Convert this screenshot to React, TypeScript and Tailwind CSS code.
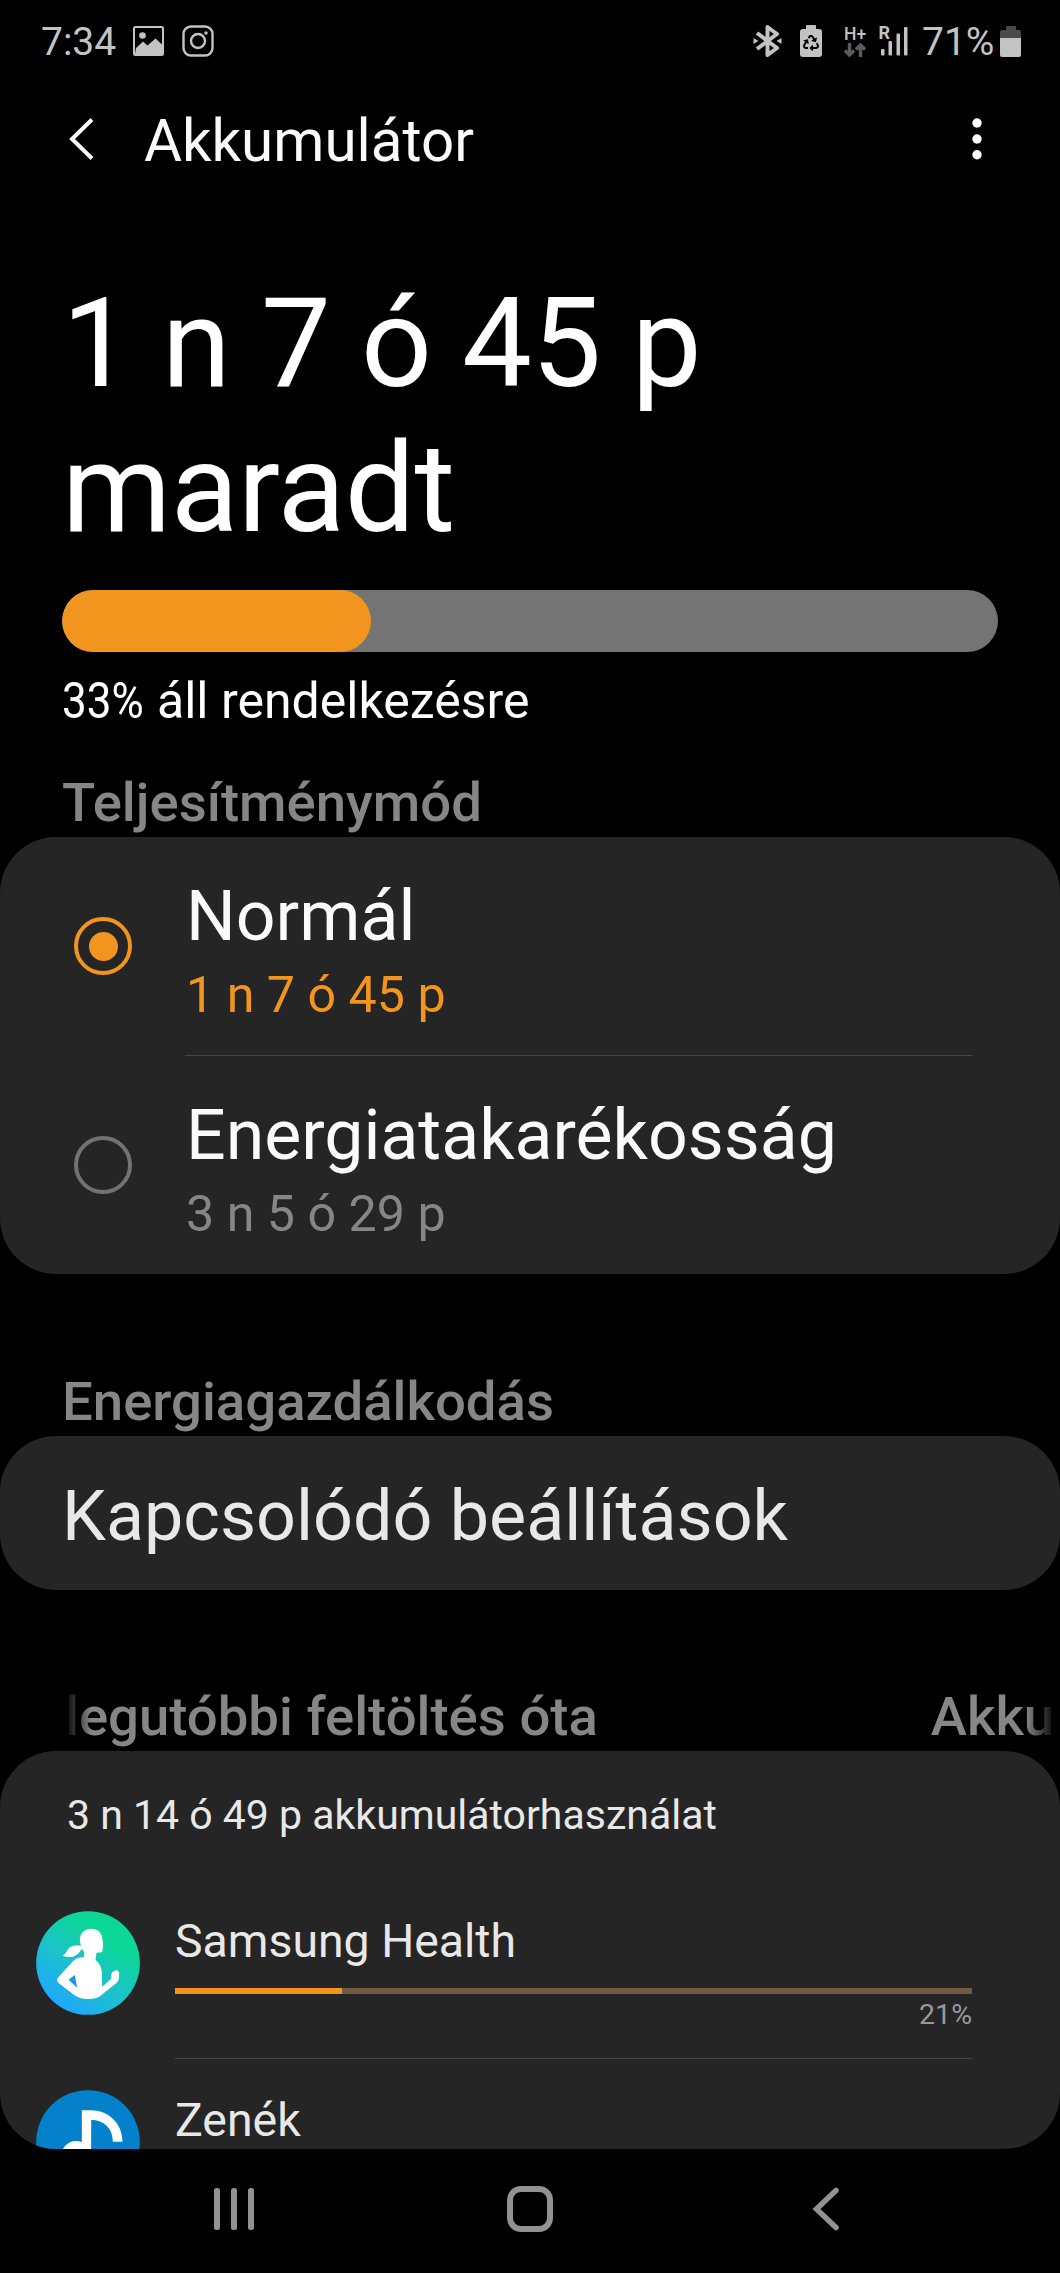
import type { ReactNode } from "react"
import { FaRecycle } from "react-icons/fa"
import clsx from "clsx"

type PowerMode = {
  name: string
  remaining: string
  selected: boolean
}

type AppUsage = {
  name: string
  percent: number
  icon: ReactNode
}

const BATTERY_LEVEL = 33

const POWER_MODES: PowerMode[] = [
  { name: "Normál", remaining: "1 n 7 ó 45 p", selected: true },
  { name: "Energiatakarékosság", remaining: "3 n 5 ó 29 p", selected: false },
]

const APP_USAGE: AppUsage[] = [
  { name: "Samsung Health", percent: 21, icon: <HealthIcon /> },
  { name: "Zenék", percent: 9, icon: <MusicIcon /> },
]

function HealthIcon() {
  return (
    <svg viewBox="48 63 311 312" className="h-[104px] w-[104px]">
      <defs>
        <linearGradient id="health" x1="0.3" y1="0.95" x2="0.75" y2="0.3">
          <stop offset="0" stopColor="#1fa9fb" />
          <stop offset="0.5" stopColor="#1bc2cb" />
          <stop offset="1" stopColor="#0bd896" />
        </linearGradient>
      </defs>
      <circle cx="203.500" cy="219" r="155.500" fill="url(#health)" />
      <path
        fill="#fff"
        d="M179 150C179 128 195 116 213 116C232 116 246 128 247 148L249 166L246 187L229 188L226 210C236 218 245 230 245 250L246 290L273 266C271 252 276 242 290 241C298 243 298 252 296 266C295 273 290 278 284 283L240 318C230 326 215 327 200 327C185 327 173 323 163 316L118 281C109 274 109 268 115 261L160 212C168 204 180 201 192 200L192 186L184 176C176 194 158 208 127 197C140 190 140 176 152 170C162 165 172 166 182 167Z"
      />
      <path fill="#1d96ea" d="M145 269L164 255L171 293Z" />
    </svg>
  )
}

function MusicIcon() {
  return (
    <svg viewBox="48 600 311 312" className="h-[104px] w-[104px]">
      <circle cx="203.500" cy="756" r="155.500" fill="#0382cb" />
      <path fill="#fff" d="M185 661H212C264 661 307 700 307 755H278C278 714 250 690 213 690V800H185Z" />
      <circle cx="168" cy="797" r="44" fill="#fff" />
    </svg>
  )
}

function StatusBar() {
  return (
    <div className="flex h-[82px] items-center pr-[39px] pl-[41px] text-[39px] leading-none text-[#c3c3c3]">
      <span className="w-[92px] pt-[3px]">7:34</span>
      <svg viewBox="0 0 31 30" className="h-[30px] w-[31px]">
        <rect x="1" y="1" width="29" height="28" rx="1.500" fill="none" stroke="currentColor" strokeWidth="2" />
        <circle cx="9.500" cy="9.500" r="3.300" fill="currentColor" />
        <path d="M3 22L10 15.500L14.500 19.500L22.500 12.500L29 18.500V28H2Z" fill="currentColor" />
      </svg>
      <svg viewBox="0 0 32 32" className="ml-[18px] h-[32px] w-[32px]" fill="none" stroke="currentColor">
        <rect x="1.500" y="1.500" width="29" height="29" rx="7.500" strokeWidth="2.400" />
        <circle cx="16" cy="16" r="7" strokeWidth="2.400" />
        <circle cx="24" cy="8" r="1.700" fill="currentColor" stroke="none" />
      </svg>

      <svg viewBox="0 0 29 34" className="ml-auto h-[34px] w-[29px]">
        <path
          d="M4 9L24 24L14.500 31V3L24 10L4 25"
          fill="none"
          stroke="currentColor"
          strokeWidth="4"
          strokeLinejoin="round"
        />
        <path d="M0.500 14L5.500 17L0.500 20ZM28.500 14L23.500 17L28.500 20Z" fill="currentColor" />
      </svg>
      <div className="ml-[18px] flex h-[32px] w-[22px] flex-col items-center">
        <div className="h-[4px] w-[10px] rounded-t-[1px] bg-[#c3c3c3]" />
        <div className="flex h-[28px] w-[22px] items-center justify-center rounded-[3px] bg-[#c3c3c3]">
          <FaRecycle className="h-[16px] w-[16px] text-black" />
        </div>
      </div>
      <div className="ml-[22px] flex h-[32px] w-[22px] flex-col justify-between">
        <span className="text-[17.500px] leading-[18px] font-medium">H+</span>
        <svg viewBox="0 0 22 14" className="h-[14px] w-[22px]" fill="none" stroke="#5c5c5c" strokeWidth="3.400">
          <path d="M5.500 0V12M1 7.500L5.500 12L10 7.500M16.500 14V2M12 6.500L16.500 2L21 6.500" />
        </svg>
      </div>
      <svg viewBox="0 0 29 32" className="ml-[13px] h-[32px] w-[29px] overflow-visible" fill="currentColor">
        <text x="-0.500" y="13.500" fontSize="18" fontWeight="700">
          R
        </text>
        <rect x="2" y="24" width="3.500" height="6.500" rx="1" />
        <rect x="9.500" y="16" width="3.500" height="14.500" rx="1" />
        <rect x="17.500" y="8.500" width="3.500" height="22" rx="1" />
        <rect x="25" y="2" width="3.500" height="28.500" rx="1" />
      </svg>
      <span className="ml-[14px] w-[78px] pt-[3px]">71%</span>
      <div className="flex h-[31px] w-[21px] flex-col items-center">
        <div className="h-[4px] w-[10px] rounded-t-[1px] bg-[#4a4a4a]" />
        <div className="h-[8px] w-full rounded-t-[2px] bg-[#4a4a4a]" />
        <div className="h-[19px] w-full rounded-b-[2px] bg-[#c3c3c3]" />
      </div>
    </div>
  )
}

function Header() {
  return (
    <header className="flex h-[113px] items-center pr-[78px] pl-[69px]">
      <svg viewBox="0 0 25 42" className="h-[42px] w-[25px]" fill="none" stroke="#fff" strokeWidth="4">
        <path d="M23 1.500L3 21L23 40.500" />
      </svg>
      <h1 className="ml-[50px] pt-[6px] text-[58.300px] leading-none text-[#fafafa]">Akkumulátor</h1>
      <svg viewBox="0 0 10 42" className="ml-auto h-[42px] w-[10px]" fill="#fff">
        <circle cx="5" cy="5" r="4.700" />
        <circle cx="5" cy="21" r="4.700" />
        <circle cx="5" cy="36.700" r="4.700" />
      </svg>
    </header>
  )
}

function SectionTitle({ children }: { children: ReactNode }) {
  return <h2 className="h-[66px] px-[62px] text-[54.500px] leading-[62px] font-medium text-[#868686]">{children}</h2>
}

function Radio({ checked }: { checked: boolean }) {
  return (
    <span
      className={clsx(
        "flex h-[58px] w-[58px] items-center justify-center rounded-full border-[4px]",
        checked ? "border-[#f1951e]" : "border-[#727272]"
      )}
    >
      {checked ? <span className="h-[29px] w-[29px] rounded-full bg-[#f1951e]" /> : null}
    </span>
  )
}

function PowerModeRow({ mode }: { mode: PowerMode }) {
  return (
    <div className="flex h-[218px] items-center pl-[74px]">
      <Radio checked={mode.selected} />
      <div className="ml-[54px] pt-[8px]">
        <p className="text-[69.800px] leading-[82px] text-[#fafafa]">{mode.name}</p>
        <p className={clsx("mt-2 text-[50.200px] leading-[60px]", mode.selected ? "text-[#f1951e]" : "text-[#868686]")}>
          {mode.remaining}
        </p>
      </div>
    </div>
  )
}

function AppUsageRow({ app }: { app: AppUsage }) {
  return (
    <div className="flex h-[179px] shrink-0 pr-[88px] pl-[36px]">
      <div className="w-[139px] pt-[31px]">{app.icon}</div>
      <div className="flex flex-1 flex-col border-b border-[#454545] pt-[34px]">
        <p className="text-[46.400px] leading-[54px] text-[#e8e8e8]">{app.name}</p>
        <div className="mt-5 h-[6px] bg-[#725b43]">
          <div className="h-full bg-[#f1951e]" style={{ width: `${app.percent}%` }} />
        </div>
        <p className="mt-1 text-right text-[28.500px] leading-[34px] text-[#999999]">{app.percent}%</p>
      </div>
    </div>
  )
}

function NavigationBar() {
  return (
    <nav className="flex h-[124px] items-center justify-between px-[213px] pb-[4px]">
      <svg viewBox="0 0 42 44" className="h-[44px] w-[42px]" fill="#929292">
        <rect x="1" y="1" width="6" height="42" rx="2.500" />
        <rect x="18" y="1" width="6" height="42" rx="2.500" />
        <rect x="35" y="1" width="6" height="42" rx="2.500" />
      </svg>
      <div className="h-[46px] w-[46px] rounded-[14px] border-[6px] border-[#929292]" />
      <svg viewBox="0 0 42 44" className="h-[44px] w-[42px]" fill="none" stroke="#929292" strokeWidth="5.500" strokeLinecap="round">
        <path d="M31 3.500L11.500 22L31 40.500" />
      </svg>
    </nav>
  )
}

export default function App() {
  return (
    <div className="flex h-[2273px] w-[1060px] flex-col overflow-hidden bg-black font-[Roboto,sans-serif] whitespace-nowrap">
      <StatusBar />
      <Header />

      <section className="mt-[76px] px-[62px] text-white">
        <p className="text-[124.500px] leading-[145px] tracking-[-0.4px]">
          1 n 7 ó 45 p
          <br />
          maradt
        </p>
        <div className="mt-[29px] h-[62px] overflow-hidden rounded-full bg-[#747474]">
          <div className="h-full rounded-full bg-[#f1951e]" style={{ width: `${BATTERY_LEVEL}%` }} />
        </div>
        <p className="mt-[19px] flex text-[50px] leading-[60px]">
          <span className="w-[95px] origin-left scale-x-[0.88]">{BATTERY_LEVEL}%</span>
          <span>áll rendelkezésre</span>
        </p>
      </section>

      <section className="mt-[40px]">
        <SectionTitle>Teljesítménymód</SectionTitle>
        <div className="rounded-[56px] bg-[#252525]">
          <PowerModeRow mode={POWER_MODES[0]} />
          <div className="mr-[88px] ml-[185px] h-px bg-[#454545]" />
          <PowerModeRow mode={POWER_MODES[1]} />
        </div>
      </section>

      <section className="mt-[96px]">
        <SectionTitle>Energiagazdálkodás</SectionTitle>
        <div className="flex h-[154px] items-center rounded-[56px] bg-[#252525] px-[62px] pt-[6px]">
          <p className="text-[70px] leading-none text-[#e8e8e8]">Kapcsolódó beállítások</p>
        </div>
      </section>

      <section className="mt-[95px]">
        {/* scrolling title, faded out at both ends */}
        <div className="ml-[65px] flex h-[66px] gap-[333px] overflow-hidden mask-[linear-gradient(to_right,transparent,black_26px,black_961px,transparent_991px)] text-[54.500px] leading-[62px] font-medium text-[#868686]">
          <span>legutóbbi feltöltés óta</span>
          <span>Akkumulátorhasználat</span>
        </div>
        <div className="flex h-[398px] flex-col overflow-hidden rounded-[56px] bg-[#252525]">
          <p className="mt-[39px] mb-[40px] px-[67px] text-[41px] leading-[50px] text-[#e8e8e8]">
            3 n 14 ó 49 p akkumulátorhasználat
          </p>
          {APP_USAGE.map((app) => (
            <AppUsageRow key={app.name} app={app} />
          ))}
        </div>
      </section>

      <NavigationBar />
    </div>
  )
}
